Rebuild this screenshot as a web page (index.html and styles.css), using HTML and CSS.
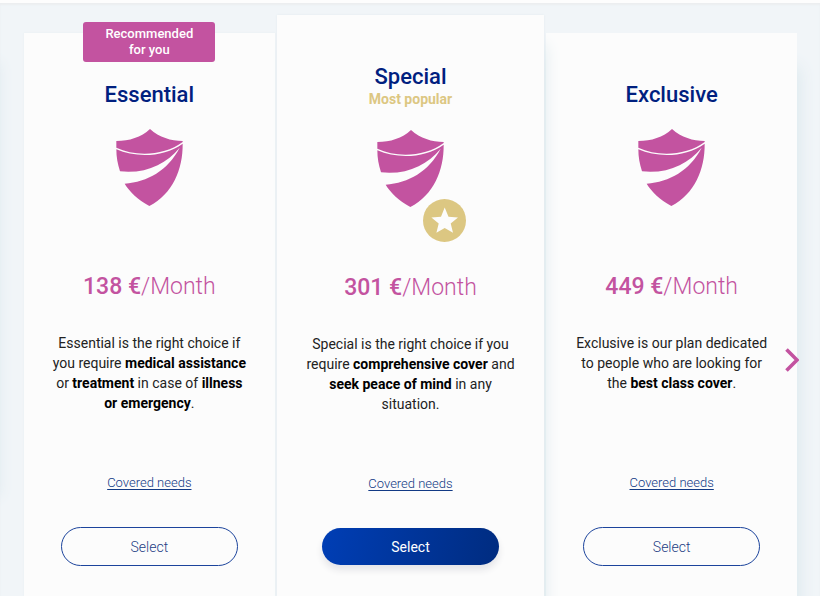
FILE: index.html
```html
<!DOCTYPE html>
<html lang="en">
<head>
<meta charset="utf-8">
<meta name="viewport" content="width=device-width, initial-scale=1">
<title>Health plans</title>
<link rel="stylesheet" href="styles.css">
</head>
<body>
<svg class="sprite" aria-hidden="true">
  <symbol id="shield" viewBox="0 0 201 231">
    <path d="M102 0C75 25 40 36 1 36V56C60 84 145 80 200 39V36C165 36 130 25 102 0Z"/>
    <path d="M200 44C201 120 170 195 100 231C65 212 40 187 26 164C95 158 155 125 191 56C150 105 90 135 12 127C5 105 1 85 1 61C60 87 145 85 200 44Z"/>
  </symbol>
</svg>
<main class="plans">
  <div class="previous" aria-hidden="true"></div>
  <article class="card">
    <p class="ribbon">Recommended<br>for you</p>
    <header class="heading"><h2 class="name">Essential</h2></header>
    <div class="emblem"><svg class="shield" aria-hidden="true"><use href="#shield"/></svg></div>
    <p class="price"><strong>138 €</strong>/Month</p>
    <p class="summary">Essential is the right choice if you require <strong>medical assistance</strong> or <strong>treatment</strong> in case of <strong>illness or emergency</strong>.</p>
    <a class="needs" href="#">Covered needs</a>
    <button class="select" type="button">Select</button>
  </article>
  <article class="card featured">
    <header class="heading"><h2 class="name">Special</h2><p class="popular">Most popular</p></header>
    <div class="emblem"><svg class="shield" aria-hidden="true"><use href="#shield"/></svg>
      <svg class="star" viewBox="0 0 43 43" aria-hidden="true"><circle cx="21.500" cy="21.500" r="21.500" fill="#dcc782"/><path fill="#fcfcfc" d="M21.700 8.500L25.500 17.800L35 18.500L27.700 24.600L30 33.700L21.700 28.900L13.400 33.700L15.700 24.600L8.400 18.500L18 17.800Z"/></svg>
    </div>
    <p class="price"><strong>301 €</strong>/Month</p>
    <p class="summary">Special is the right choice if you require <strong>comprehensive cover</strong> and <strong>seek peace of mind</strong> in any situation.</p>
    <a class="needs" href="#">Covered needs</a>
    <button class="select primary" type="button">Select</button>
  </article>
  <article class="card last">
    <header class="heading"><h2 class="name">Exclusive</h2></header>
    <div class="emblem"><svg class="shield" aria-hidden="true"><use href="#shield"/></svg></div>
    <p class="price"><strong>449 €</strong>/Month</p>
    <p class="summary">Exclusive is our plan dedicated to people who are looking for the <strong>best class cover</strong>.</p>
    <a class="needs" href="#">Covered needs</a>
    <button class="select" type="button">Select</button>
  </article>
  <button class="next" type="button" aria-label="Next plans"><svg viewBox="0 0 14 24" aria-hidden="true"><path d="M1.500 1.500L12 12L1.500 22.500" fill="none" stroke="#c353a0" stroke-width="3.600"/></svg></button>
</main>
</body>
</html>
```
FILE: styles.css
```css
* {
  box-sizing: border-box;
}

body {
  margin: 0;
  background: #f1f5f8;
  color: #222;
  font: 300 14px/20px Roboto, "Liberation Sans", sans-serif;
}

h2,
p {
  margin: 0;
}

.sprite {
  position: absolute;
  width: 0;
  height: 0;
}

.plans {
  position: relative;
  display: grid;
  grid-template-columns: 251fr 268fr 251fr;
  column-gap: 2px;
  height: 100vh;
  min-height: 590px;
  padding: 12px 23px 0 24px;
  border-top: 3px solid #fdfdfd;
  box-shadow: inset 0 2px 2px #ebeef0;
  overflow: hidden;
}

.previous {
  position: absolute;
  top: 60px;
  bottom: 100px;
  right: 100%;
  width: 20px;
  box-shadow: 0 0 14px #e2ebf0;
}

.card {
  position: relative;
  display: flex;
  flex-direction: column;
  align-items: center;
  margin-top: 18px;
  padding: 0 26px;
  background: #fcfcfc;
  box-shadow: 0 0 2px #e8eef2;
  text-align: center;
}

.featured {
  z-index: 1;
  margin-top: 0;
  padding: 0 24px;
  box-shadow: 0 0 2px #e2eaef, 6px 24px 16px -6px #dbe8ed;
}

.last {
  box-shadow: 4px 32px 16px -2px #dbe8ed;
}

.ribbon {
  position: absolute;
  top: -11px;
  width: 132px;
  padding: 4px 0;
  border-radius: 3px;
  background: #c353a0;
  color: #fff;
  font-size: 13px;
  line-height: 16px;
  font-weight: 500;
}

.heading {
  height: 96px;
  padding-top: 48px;
}

.featured .heading {
  height: 115px;
}

.name {
  color: #00207f;
  font-size: 22px;
  line-height: 28px;
  font-weight: 500;
}

.popular {
  color: #dcc782;
  font-size: 14px;
  line-height: 16px;
  font-weight: 700;
}

.emblem {
  position: relative;
  height: 142px;
}

.shield {
  display: block;
  width: 67px;
  height: 77px;
  fill: #c353a0;
}

.star {
  position: absolute;
  top: 69px;
  left: 46px;
  width: 43px;
  height: 43px;
}

.price {
  color: #c353a0;
  font-size: 23px;
  line-height: 32px;
}

.price strong {
  font-weight: 500;
}

.summary {
  min-height: 80px;
  margin: 30px 0 60px;
  font-weight: 400;
}

.summary strong {
  color: #000;
  font-weight: 700;
}

.needs {
  color: #123a85;
  font-size: 13px;
  line-height: 20px;
  text-underline-offset: 2px;
}

.select {
  width: 177px;
  height: 39px;
  margin-top: 34px;
  border: 1px solid #1c449c;
  border-radius: 20px;
  background: transparent;
  color: #1c3c84;
  font: inherit;
  cursor: pointer;
}

.primary {
  height: 37px;
  border: 0;
  background: linear-gradient(100deg, #003eb5, #002c80);
  box-shadow: 0 5px 7px #e5e5e8;
  color: #fff;
  font-weight: 400;
}

.next {
  position: absolute;
  z-index: 2;
  top: 345px;
  right: 21px;
  width: 14px;
  height: 24px;
  padding: 0;
  border: 0;
  background: none;
  cursor: pointer;
}

.next svg {
  display: block;
  width: 14px;
  height: 24px;
}
```
